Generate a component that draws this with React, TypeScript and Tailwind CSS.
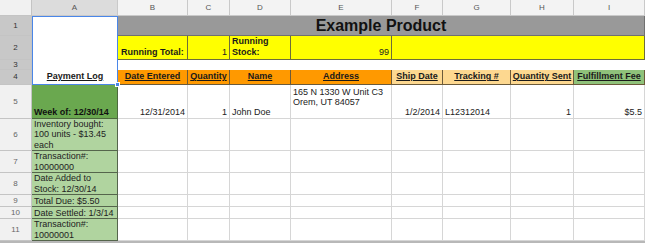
import React from "react";

const F = { fontFamily: '"Liberation Sans", Arial, sans-serif' };

function RH({ n, sel }: { n: number; sel?: boolean }) {
  return (
    <div
      className={`flex items-center justify-center border-r border-b border-[#c4c4c4] text-[8px] ${
        sel ? "bg-[#c8c8c8] text-[#333]" : "bg-[#f1f1f1] text-[#666]"
      }`}
    >
      {n}
    </div>
  );
}

function CH({ l, sel }: { l: string; sel?: boolean }) {
  return (
    <div
      className={`flex items-center justify-center border-r border-b border-[#c9c9c9] text-[8px] text-[#555] ${
        sel ? "bg-[#dcdcdc]" : "bg-[#f3f3f3]"
      }`}
    >
      {l}
    </div>
  );
}

function Hd({ t, c }: { t: string; c: string }) {
  return (
    <div
      className={`flex items-center justify-center border-r border-b border-[#6b5a3a] text-[9px] font-bold underline text-[#1a1a1a] whitespace-nowrap overflow-hidden ${c}`}
    >
      {t}
    </div>
  );
}

function W({ children, right }: { children?: React.ReactNode; right?: boolean }) {
  return (
    <div
      className={`flex flex-col justify-end border-r border-b border-[#d6d6d6] bg-white px-[2px] pb-[1px] text-[9px] leading-[10.5px] text-[#222] overflow-hidden ${
        right ? "items-end" : "items-start"
      }`}
    >
      {children}
    </div>
  );
}

function G({ children }: { children?: React.ReactNode }) {
  return (
    <div className="flex flex-col justify-end border-r border-b border-[#55654c] bg-[#b0d49f] px-[2px] text-[9px] leading-[10.5px] text-[#222] overflow-hidden">
      {children}
    </div>
  );
}

function Empty8() {
  return (
    <>
      <W /><W /><W /><W /><W /><W /><W /><W />
    </>
  );
}

export default function App() {
  return (
    <div className="w-[645px] h-[243px] bg-white overflow-hidden" style={F}>
      <div className="grid grid-cols-[32px_86px_70px_42px_61px_101px_51px_68px_63px_71px] grid-rows-[16px_20px_24px_10px_15px_34px_32px_22px_22px_12px_12px_22px] border-b-2 border-[#b8b8b8]">
        {/* header row */}
        <div className="border-r border-b border-[#c4c4c4] bg-[#f1f1f1]" />
        <CH l="A" sel />
        <CH l="B" />
        <CH l="C" />
        <CH l="D" />
        <CH l="E" />
        <CH l="F" />
        <CH l="G" />
        <CH l="H" />
        <CH l="I" />

        {/* row 1 */}
        <RH n={1} sel />
        <div className="relative row-span-4 flex items-end justify-center border-[1.5px] border-[#4a86e8] bg-white pb-[1px] text-[9px] font-bold underline text-[#1a1a1a]">
          Payment Log
          <div className="absolute -right-[3px] -bottom-[3px] h-[5px] w-[5px] bg-[#4a86e8] border border-white" />
        </div>
        <div className="col-span-8 flex items-center justify-center border-r border-b border-[#707070] bg-[#999999] text-[16px] font-bold text-[#111]">
          Example Product
        </div>

        {/* row 2 */}
        <RH n={2} sel />
        <div className="flex items-end border-r border-b border-[#6e6e3a] bg-[#ffff00] px-[3px] pb-[1px] text-[9px] font-bold leading-[11px] text-[#1a1a1a] whitespace-nowrap">
          Running Total:
        </div>
        <div className="flex items-end justify-end border-r border-b border-[#6e6e3a] bg-[#ffff00] px-[2px] pb-[1px] text-[9px] leading-[11px] text-[#222]">
          1
        </div>
        <div className="flex flex-col justify-end border-r border-b border-[#6e6e3a] bg-[#ffff00] px-[2px] pb-[1px] text-[9px] font-bold leading-[11px] text-[#1a1a1a]">
          <span>Running</span>
          <span>Stock:</span>
        </div>
        <div className="flex items-end justify-end border-r border-b border-[#6e6e3a] bg-[#ffff00] px-[2px] pb-[1px] text-[9px] leading-[11px] text-[#222]">
          99
        </div>
        <div className="col-span-4 border-r border-b border-[#6e6e3a] bg-[#ffff00]" />

        {/* row 3 */}
        <RH n={3} sel />
        <div className="col-span-8 bg-white" />

        {/* row 4 */}
        <RH n={4} sel />
        <Hd t="Date Entered" c="bg-[#ff9900]" />
        <Hd t="Quantity" c="bg-[#ff9900]" />
        <Hd t="Name" c="bg-[#ff9900]" />
        <Hd t="Address" c="bg-[#ff9900]" />
        <Hd t="Ship Date" c="bg-[#fdd890]" />
        <Hd t="Tracking #" c="bg-[#fdd890]" />
        <Hd t="Quantity Sent" c="bg-[#fdd890]" />
        <Hd t="Fulfillment Fee" c="bg-[#8fc27a]" />

        {/* row 5 */}
        <RH n={5} />
        <div className="flex items-end border-r border-b border-[#4d6a3e] bg-[#6aa84f] px-[2px] pb-[1px] text-[9px] font-bold leading-[10.5px] text-[#111] whitespace-nowrap">
          Week of: 12/30/14
        </div>
        <W right>12/31/2014</W>
        <W right>1</W>
        <W>John Doe</W>
        <div className="flex flex-col justify-start border-r border-b border-[#d6d6d6] bg-white px-[2px] pt-[2px] text-[9px] leading-[10px] text-[#222]">
          <span>165 N 1330 W Unit C3</span>
          <span>Orem, UT 84057</span>
        </div>
        <W right>1/2/2014</W>
        <W>L12312014</W>
        <W right>1</W>
        <W right>$5.5</W>

        {/* row 6 */}
        <RH n={6} />
        <G>
          <span>Inventory bought:</span>
          <span>100 units - $13.45</span>
          <span>each</span>
        </G>
        <Empty8 />

        {/* row 7 */}
        <RH n={7} />
        <G>
          <span>Transaction#:</span>
          <span>10000000</span>
        </G>
        <Empty8 />

        {/* row 8 */}
        <RH n={8} />
        <G>
          <span>Date Added to</span>
          <span>Stock: 12/30/14</span>
        </G>
        <Empty8 />

        {/* row 9 */}
        <RH n={9} />
        <G>
          <span className="whitespace-nowrap">Total Due: $5.50</span>
        </G>
        <Empty8 />

        {/* row 10 */}
        <RH n={10} />
        <G>
          <span className="whitespace-nowrap">Date Settled: 1/3/14</span>
        </G>
        <Empty8 />

        {/* row 11 */}
        <RH n={11} />
        <G>
          <span>Transaction#:</span>
          <span>10000001</span>
        </G>
        <Empty8 />
      </div>
    </div>
  );
}
